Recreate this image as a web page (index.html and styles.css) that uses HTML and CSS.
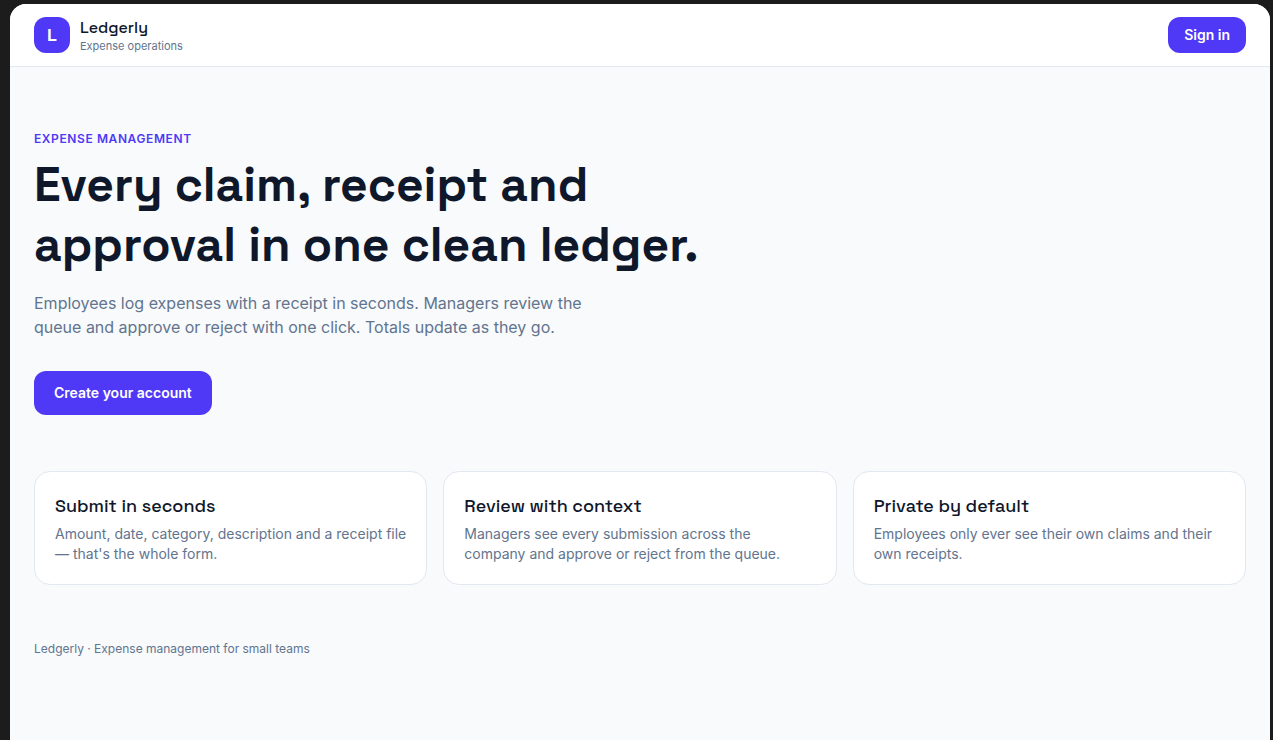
FILE: index.html
```html
<!DOCTYPE html>
<html lang="en">
<head>
<meta charset="utf-8">
<meta name="viewport" content="width=device-width, initial-scale=1">
<title>Ledgerly</title>
<link rel="stylesheet" href="styles.css">
</head>
<body>
<div class="window">
  <header class="topbar">
    <a class="brand" href="#">
      <span class="brand-mark">L</span>
      <span class="brand-text">
        <span class="brand-name">Ledgerly</span>
        <span class="brand-tagline">Expense operations</span>
      </span>
    </a>
    <button class="button" type="button">Sign in</button>
  </header>
  <main class="content">
    <section class="hero">
      <p class="eyebrow">Expense management</p>
      <h1 class="headline">Every claim, receipt and approval in one clean ledger.</h1>
      <p class="lead">Employees log expenses with a receipt in seconds. Managers review the queue and approve or reject with one click. Totals update as they go.</p>
      <button class="button button-large" type="button">Create your account</button>
    </section>
    <section class="features">
      <article class="card">
        <h2 class="card-title">Submit in seconds</h2>
        <p class="card-text">Amount, date, category, description and a receipt file — that's the whole form.</p>
      </article>
      <article class="card">
        <h2 class="card-title">Review with context</h2>
        <p class="card-text">Managers see every submission across the company and approve or reject from the queue.</p>
      </article>
      <article class="card">
        <h2 class="card-title">Private by default</h2>
        <p class="card-text">Employees only ever see their own claims and their own receipts.</p>
      </article>
    </section>
    <footer class="footer">Ledgerly · Expense management for small teams</footer>
  </main>
</div>
</body>
</html>
```
FILE: styles.css
```css
:root {
  --ink: #0f172b;
  --muted: #62748e;
  --line: #e2e8f0;
  --accent: #4f39f6;
  --display: "Space Grotesk", Inter, sans-serif;
}

* {
  box-sizing: border-box;
}

body {
  min-height: 100vh;
  margin: 0;
  padding: 4px 3px 0 10px;
  display: flex;
  background: #1c1c1c;
  color: var(--ink);
  font-family: Inter, sans-serif;
}

h1, h2, p {
  margin: 0;
}

.window {
  flex: 1;
  min-width: 0;
  overflow: hidden;
  border-radius: 16px 16px 0 0;
  background: #f8fafc;
}

.topbar {
  display: flex;
  align-items: center;
  justify-content: space-between;
  padding: 13px 24px;
  border-bottom: 1px solid var(--line);
  background: #fff;
}

.brand {
  display: flex;
  align-items: center;
  gap: 10px;
  color: inherit;
  text-decoration: none;
}

.brand-mark {
  display: grid;
  place-items: center;
  width: 36px;
  height: 36px;
  border-radius: 12px;
  background: var(--accent);
  color: #fff;
  font: 700 18px/28px var(--display);
}

.brand-text {
  display: flex;
  flex-direction: column;
}

.brand-name {
  font: 500 16px/22px var(--display);
}

.brand-tagline {
  color: var(--muted);
  font-size: 11px;
  line-height: 14px;
}

.button {
  height: 36px;
  padding: 0 16px;
  border: 0;
  border-radius: 12px;
  background: var(--accent);
  color: #fff;
  font: 600 14px/20px Inter, sans-serif;
  cursor: pointer;
}

.button-large {
  height: 44px;
  padding: 0 20px;
}

.content {
  padding: 64px 24px;
}

.hero {
  max-width: 672px;
}

.eyebrow {
  color: var(--accent);
  font-size: 12px;
  font-weight: 600;
  line-height: 16px;
  letter-spacing: 0.05em;
  text-transform: uppercase;
}

.headline {
  margin-top: 8px;
  font: 600 48px/60px var(--display);
}

.lead {
  max-width: 576px;
  margin-top: 16px;
  color: var(--muted);
  font-size: 16px;
  line-height: 24px;
}

.hero .button {
  margin-top: 32px;
}

.features {
  display: grid;
  grid-template-columns: repeat(3, minmax(0, 1fr));
  gap: 16px;
  margin-top: 56px;
}

.card {
  padding: 20px;
  border: 1px solid var(--line);
  border-radius: 16px;
  background: #fff;
}

.card-title {
  font: 500 18px/28px var(--display);
}

.card-text {
  margin-top: 4px;
  color: var(--muted);
  font-size: 14px;
  line-height: 20px;
}

.footer {
  margin-top: 56px;
  color: var(--muted);
  font-size: 12px;
  line-height: 16px;
}
```
